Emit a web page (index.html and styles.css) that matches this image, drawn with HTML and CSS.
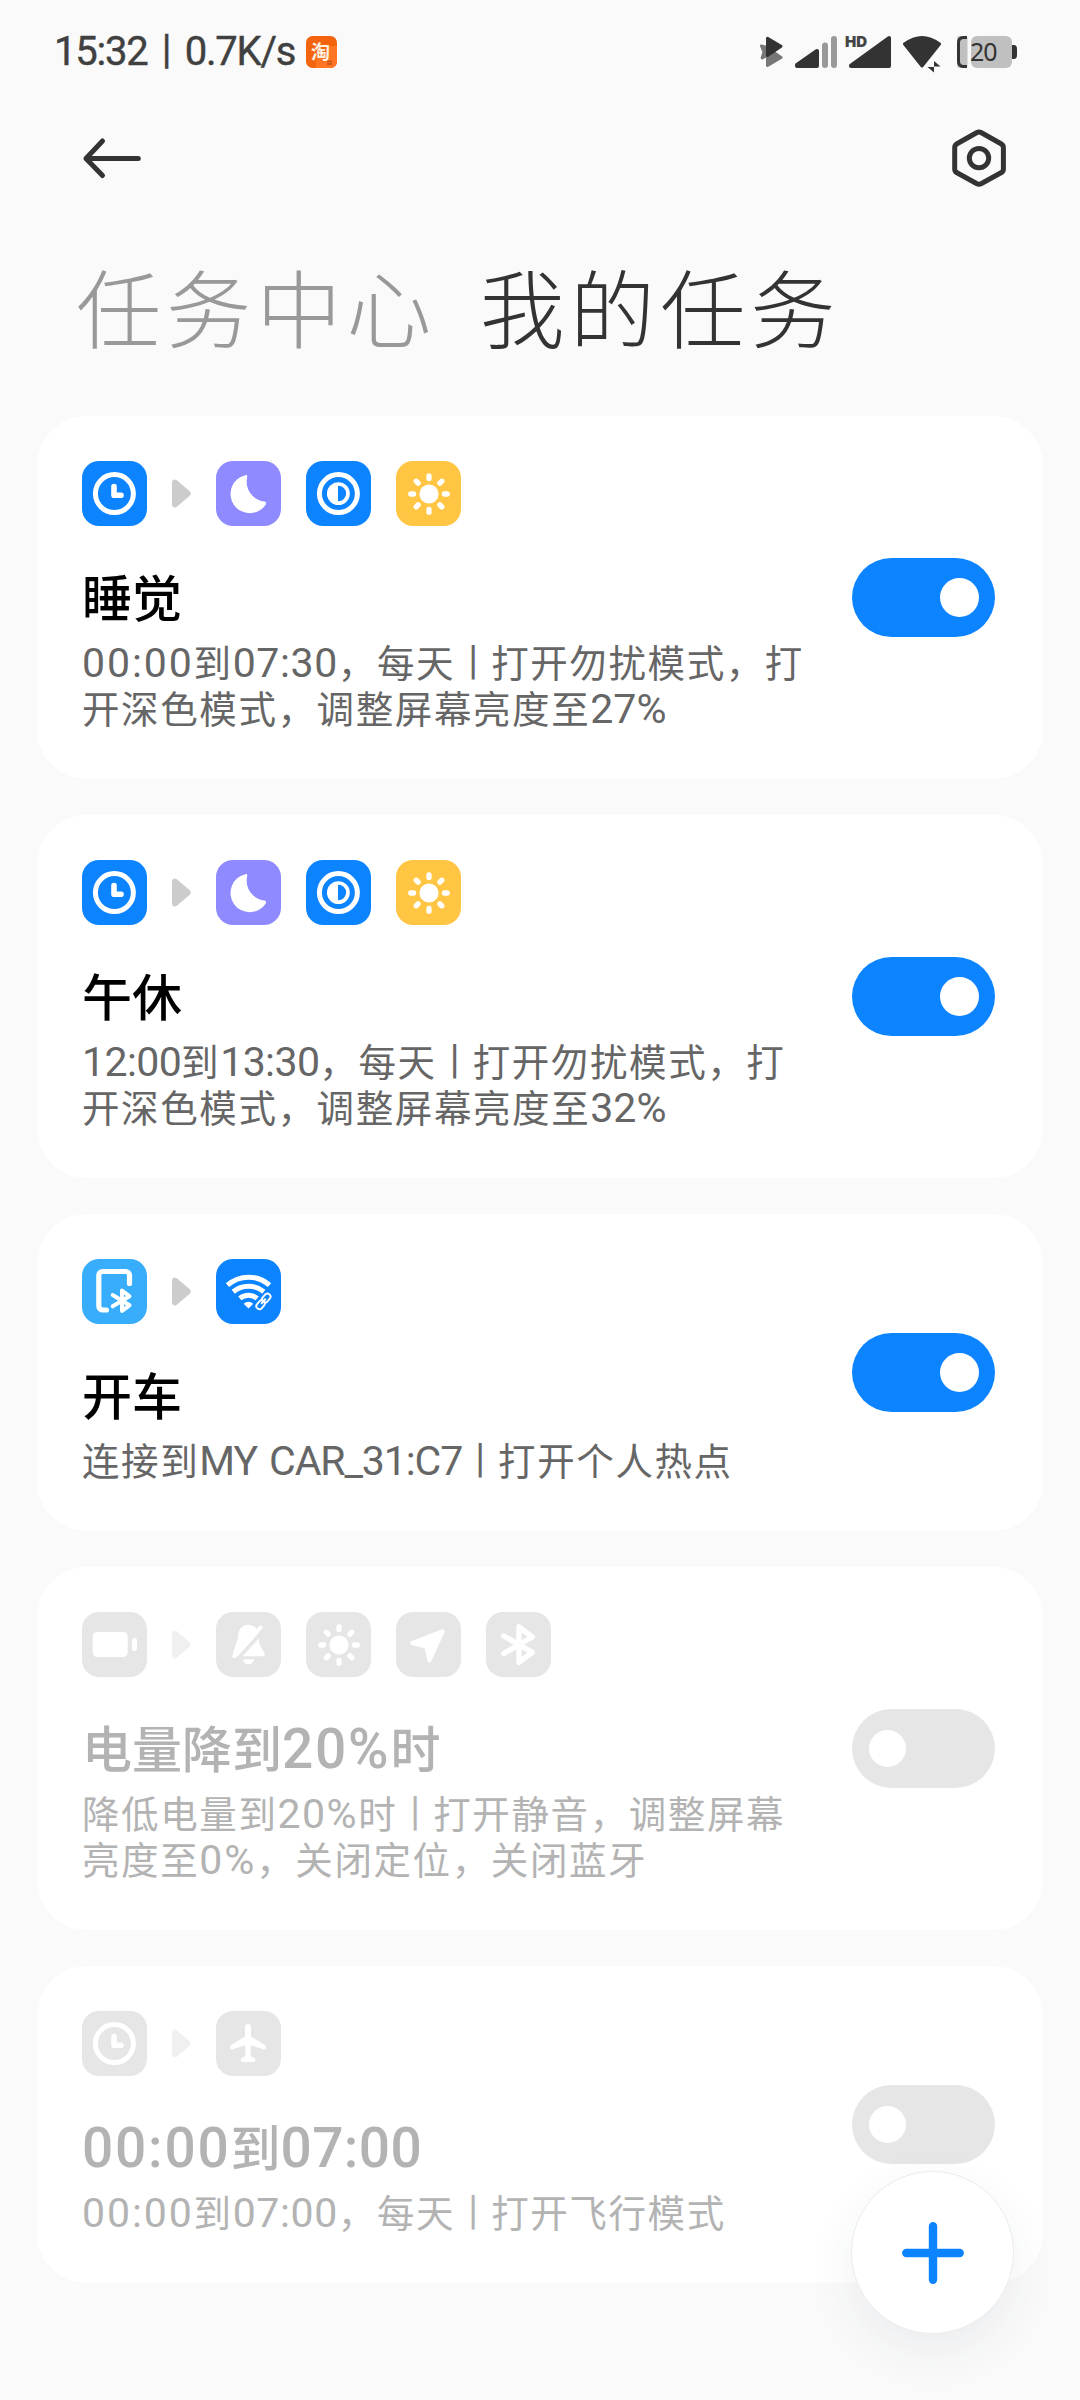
FILE: index.html
```html
<!DOCTYPE html>
<html lang="zh-CN">
<head>
<meta charset="utf-8">
<title>我的任务</title>
<link rel="stylesheet" href="styles.css">
</head>
<body>
<svg class="defs" width="0" height="0" aria-hidden="true">
  <defs>
    <symbol id="clock" viewBox="0 0 65 65">
      <g fill="none" stroke="#fff" stroke-linecap="round" stroke-linejoin="round"><circle cx="32.4" cy="32.6" r="19" stroke-width="5"/><path d="M32 25.5V34.2H39" stroke-width="5.6"/></g>
    </symbol>
    <symbol id="moon" viewBox="0 0 65 65">
      <path fill="#fff" d="M29.5 14.2A19.2 19.2 0 1 0 49.8 43.4C50.6 41.2 49 40 47 40.4A20 20 0 0 1 31 17.2C31.5 14.8 31.2 13.8 29.5 14.2Z"/>
    </symbol>
    <symbol id="dark" viewBox="0 0 65 65">
      <g fill="none" stroke="#fff"><circle cx="32.4" cy="32.6" r="19" stroke-width="5"/><circle cx="32.4" cy="32.6" r="9.6" stroke-width="3.7"/></g>
      <path fill="#fff" d="M32 22a10.5 10.5 0 0 0 0 21z"/>
    </symbol>
    <symbol id="sun" viewBox="0 0 65 65">
      <circle cx="33" cy="33" r="9.6" fill="#fff"/>
      <path fill="none" stroke="#fff" stroke-width="5.3" stroke-linecap="round" d="M33 14.8v2.8M33 48.4v2.8M14.8 33h2.8M48.4 33h2.8M20.2 20.2l1.9 1.9M43.9 43.9l1.9 1.9M20.2 45.8l1.9-1.9M43.9 22.1l1.9-1.9"/>
    </symbol>
    <symbol id="phone-bt" viewBox="0 0 65 65">
      <g fill="none" stroke="#fff" stroke-linecap="round" stroke-linejoin="round"><path stroke-width="5.2" d="M47.5 24.4V16.5a4 4 0 0 0-4-4H20.8a4 4 0 0 0-4 4V47a4 4 0 0 0 4 4h3.6"/><path stroke-width="4" d="M30.7 36L47.5 46.3 40 51.8V31.5L47.5 37.3 30.7 47.3"/></g>
    </symbol>
    <symbol id="hotspot" viewBox="0 0 65 65">
      <g fill="none" stroke="#fff"><path stroke-width="5" d="M11.5 26.2A31.4 31.4 0 0 1 53.5 26.2"/><path stroke-width="5" d="M17.2 32.7A24 24 0 0 1 47.8 32.7"/><path stroke-width="5" d="M23.8 39.4A13.6 13.6 0 0 1 41.2 39.4"/></g>
      <path fill="#fff" d="M27.6 44.8Q32.5 40.8 37.2 44.8L32.5 49.4Z"/>
      <g transform="rotate(-50 47.5 42.3)" fill="none"><g stroke="#fff" stroke-width="1.9"><rect x="38.2" y="39.2" width="9.6" height="6.2" rx="3"/><rect x="47" y="39.2" width="9.6" height="6.2" rx="3"/></g><path stroke="#fff" stroke-width="1.9" d="M44 42.3h7"/></g>
    </symbol>
    <symbol id="battery" viewBox="0 0 65 65">
      <rect x="10.7" y="20" width="35" height="25" rx="4.5" fill="#fff"/><rect x="50" y="26" width="5" height="13" rx="2.5" fill="#fff"/>
    </symbol>
    <symbol id="bell-off" viewBox="0 0 65 65">
      <path fill="#fff" d="M22 26C22 18 26 12.8 32.5 12.8S43 18 43 26V31L48.6 41.5Q49.6 44.3 47 44.3H19Q16 44.3 17 41Z"/>
      <path fill="#fff" d="M26.8 47.2H38.2Q37.2 52.2 32.5 52.2T26.8 47.2Z"/>
      <path fill="none" stroke="#e6e6e6" stroke-width="3.6" d="M49 16.7L20.5 48.5"/>
      <path fill="none" stroke="#fff" stroke-width="3.8" stroke-linecap="round" d="M44.7 15.2L18.3 44.2"/>
    </symbol>
    <symbol id="locate" viewBox="0 0 65 65">
      <path fill="#fff" stroke="#fff" stroke-width="4" stroke-linejoin="round" d="M46.8 19.2L16.2 31 30.6 34.8 33.4 48.4Z"/>
    </symbol>
    <symbol id="bt" viewBox="0 0 65 65">
      <path fill="none" stroke="#fff" stroke-width="5.4" stroke-linecap="round" stroke-linejoin="round" d="M17.8 24L46.2 40.3 33 50.3V14.8L46.2 25 17.8 41.5"/>
    </symbol>
    <symbol id="plane" viewBox="0 0 65 65">
      <path fill="#fff" d="M29 16a3 3 0 0 1 6 0V25.5L48 33.6Q50.3 35 50 37.3 49.5 38.9 47.5 38.3L35 34.2 34.5 44.8 38.6 47.3Q40.5 49.6 38.3 51H26Q23.6 49.6 25.5 47.3L29.6 44.8 29 34.2 16.5 38.3Q14.3 38.9 14 37.3 13.7 35 16 33.6L29 25.5Z"/>
    </symbol>
    <symbol id="arrow" viewBox="0 0 19 29">
      <path fill="currentColor" d="M0 3.500Q.6-.8 4.500.9L17.500 12Q20 14.500 17.500 17L4.500 28Q.6 29.800 0 25.500Z"/>
    </symbol>
  </defs>
</svg>

<div class="screen">
  <header class="status">
    <div class="status-left">
      <span class="status-text">15:32</span><span class="status-text sep">|</span><span class="status-text">0.7K/s</span>
      <svg class="app-badge" width="31" height="32" viewBox="0 0 31 32"><rect width="31" height="32" rx="6.500" fill="#f4640f"/><path fill="#ff7524" d="M10 22H22V10H31V26a6 6 0 0 1-6 6H10z"/><text class="badge-char" x="5" y="23">淘</text><path stroke="#c4501a" stroke-width="1.300" d="M21 25.500h5M21 28h5"/></svg>
    </div>
    <div class="status-right">
      <svg width="33" height="45" viewBox="756 30 33 45"><g stroke-linejoin="round" stroke-width="3"><path fill="#777" stroke="#777" d="M761.500 46L766.500 47.500 781 57.500 767.500 65.500V55L762.200 58 764 52Z"/><path fill="#333" stroke="#333" d="M767.500 38.200V55.500L781 46.200Z"/></g></svg>
      <svg width="52" height="45" viewBox="789 30 52 45"><path fill="#333" stroke="#333" stroke-width="4" stroke-linejoin="round" d="M797 66V65L817 51V66Z"/><path fill="none" stroke="#999" stroke-width="6" stroke-linecap="round" d="M825 45.500V65M834 39V65"/></svg>
      <svg width="56" height="45" viewBox="841 30 56 45"><path fill="#333" stroke="#333" stroke-width="4" stroke-linejoin="round" d="M851 66V65.500L889 38V66Z"/><text class="hd" x="845" y="47">HD</text></svg>
      <svg width="51" height="45" viewBox="897 30 51 45"><path fill="#333" stroke="#333" stroke-width="3" stroke-linejoin="round" d="M904.500 44Q922 31 939.500 44L922 66Z"/><path fill="#333" d="M934 61L940.500 66.500H934zM927.500 67H934V72.500z"/></svg>
      <svg width="72" height="45" viewBox="948 30 72 45"><rect x="957" y="36" width="10.500" height="32" rx="3" fill="#c0c0c0"/><path fill="none" stroke="#333" stroke-width="3" d="M967 37.500H963.500Q958.500 37.500 958.500 43V61Q958.500 66.500 963.500 66.500H967"/><rect x="971" y="36" width="41" height="32" rx="6" fill="#c0c0c0"/><path fill="#333" d="M1012 45h2q3 0 3 4v6q0 4-3 4h-2z"/><text class="level" x="970" y="61">20</text></svg>
    </div>
  </header>

  <nav class="toolbar">
    <svg width="62" height="58" viewBox="79 129 62 58"><path fill="none" stroke="#333" stroke-width="5" stroke-linecap="round" stroke-linejoin="round" d="M138.300 158.500H86M102.500 141L86 158.500 102.500 175.500"/></svg>
    <svg width="58" height="60" viewBox="949.500 128.500 58 60"><path fill="none" stroke="#333" stroke-width="5" stroke-linejoin="round" d="M976 133.200Q978.500 131.800 981 133.200L1000.500 144.200Q1002.900 145.500 1002.900 148.200V169.400Q1002.900 172 1000.500 173.300L981 184Q978.500 185.300 976 184L956.500 173.300Q954.200 172 954.200 169.400V148.200Q954.200 145.500 956.500 144.200Z"/><circle cx="978.500" cy="158.600" r="9.700" fill="none" stroke="#333" stroke-width="5"/></svg>
  </nav>

  <div class="tabs"><span class="tab">任务中心</span><span class="tab active">我的任务</span></div>

  <main class="list">
    <section class="card">
      <div class="info">
        <div class="icons"><svg class="ic blue"><use href="#clock"/></svg><svg class="arr"><use href="#arrow"/></svg><svg class="ic purple"><use href="#moon"/></svg><svg class="ic blue"><use href="#dark"/></svg><svg class="ic amber"><use href="#sun"/></svg></div>
        <h2>睡觉</h2>
        <p><b class="wide">00:00</b>到<b>07:30</b>，每天<i>|</i>打开勿扰模式，打<br>开深色模式，调整屏幕亮度至<b class="pct">27%</b></p>
      </div>
      <div class="switch on"><span class="knob"></span></div>
    </section>

    <section class="card">
      <div class="info">
        <div class="icons"><svg class="ic blue"><use href="#clock"/></svg><svg class="arr"><use href="#arrow"/></svg><svg class="ic purple"><use href="#moon"/></svg><svg class="ic blue"><use href="#dark"/></svg><svg class="ic amber"><use href="#sun"/></svg></div>
        <h2>午休</h2>
        <p><b class="tight">12:00</b>到<b class="tight">13:30</b>，每天<i>|</i>打开勿扰模式，打<br>开深色模式，调整屏幕亮度至<b class="pct">32%</b></p>
      </div>
      <div class="switch on"><span class="knob"></span></div>
    </section>

    <section class="card short">
      <div class="info">
        <div class="icons"><svg class="ic sky"><use href="#phone-bt"/></svg><svg class="arr"><use href="#arrow"/></svg><svg class="ic blue"><use href="#hotspot"/></svg></div>
        <h2>开车</h2>
        <p>连接到<b class="device">MY CAR_31:C7</b><i>|</i>打开个人热点</p>
      </div>
      <div class="switch on"><span class="knob"></span></div>
    </section>

    <section class="card off">
      <div class="info">
        <div class="icons"><svg class="ic"><use href="#battery"/></svg><svg class="arr"><use href="#arrow"/></svg><svg class="ic"><use href="#bell-off"/></svg><svg class="ic"><use href="#sun"/></svg><svg class="ic"><use href="#locate"/></svg><svg class="ic"><use href="#bt"/></svg></div>
        <h2>电量降到<b>20%</b>时</h2>
        <p>降低电量到<b class="level-text">20%</b>时<i>|</i>打开静音，调整屏幕<br>亮度至<b class="wide">0%</b>，关闭定位，关闭蓝牙</p>
      </div>
      <div class="switch"><span class="knob"></span></div>
    </section>

    <section class="card short off">
      <div class="info">
        <div class="icons"><svg class="ic"><use href="#clock"/></svg><svg class="arr"><use href="#arrow"/></svg><svg class="ic"><use href="#plane"/></svg></div>
        <h2><b>00:00</b>到<b class="end">07:00</b></h2>
        <p><b class="wide">00:00</b>到<b>07:00</b>，每天<i>|</i>打开飞行模式</p>
      </div>
      <div class="switch"><span class="knob"></span></div>
    </section>
  </main>

  <button class="fab" aria-label="添加"><svg width="62" height="62" viewBox="0 0 62 62"><path stroke="#0d84ff" stroke-width="8.400" stroke-linecap="round" d="M31 4.300V57.700M4.300 31H57.700"/></svg></button>
</div>
</body>
</html>
```
FILE: styles.css
```css
* { box-sizing: border-box; }
body {
  margin: 0;
  background: #fafafa;
  font-family: Roboto, "Noto Sans CJK SC", sans-serif;
}
.defs { display: block; height: 0; }
.screen { position: relative; width: 1080px; height: 2400px; overflow: hidden; }
svg { display: block; flex: none; }

.status {
  height: 104px;
  padding: 0 60px 0 54px;
  display: flex;
  justify-content: space-between;
}
.status-left { display: flex; align-items: center; height: 104px; }
.status-text {
  font: 400 40px/44px Roboto, sans-serif;
  letter-spacing: -1.2px;
  color: #404040;
  -webkit-text-stroke: .4px #404040;
}
.sep { width: 37px; text-align: center; padding-bottom: 4px; }
.app-badge { margin-left: 11px; }
.badge-char { font: 700 19px "Noto Sans CJK SC", sans-serif; fill: #fff1e0; }
.status-right { display: flex; padding-top: 30px; }
.hd { font: 900 15px Inter, sans-serif; fill: #444; }
.level { font: 400 25px "Noto Sans", sans-serif; fill: #333; letter-spacing: -1px; }

.toolbar {
  height: 110px;
  padding: 0 72px 2px 79px;
  display: flex;
  justify-content: space-between;
  align-items: center;
}
.tabs {
  height: 202px;
  padding: 35px 0 0 76px;
  display: flex;
  gap: 43px;
}
.tab {
  font-size: 85px;
  line-height: 128px;
  font-weight: 300;
  letter-spacing: 5.200px;
  color: #999;
  white-space: nowrap;
}
.tab.active { color: #333; }

.list { display: flex; flex-direction: column; gap: 36px; padding: 0 37px; }
.card {
  height: 363px;
  padding: 45px 48px 0 45px;
  border-radius: 50px;
  background: #fff;
  display: flex;
  justify-content: space-between;
}
.card.short { height: 317px; }
.icons { display: flex; align-items: center; gap: 25px; height: 65px; }
.ic { width: 65px; height: 65px; border-radius: 17px; background: #e6e6e6; }
.arr { width: 19px; height: 29px; color: #ccc; }
.off .arr { color: #f0f0f0; }
.blue { background: #0d84ff; }
.purple { background: #8f8aff; }
.amber { background: #ffc543; }
.sky { background: #38adfc; }

h2 {
  margin: 38px 0 0;
  height: 72px;
  font-size: 50px;
  line-height: 72px;
  font-weight: 500;
  color: #000;
  white-space: nowrap;
}
p {
  margin: 5px 0 0;
  font-size: 37.500px;
  line-height: 46px;
  letter-spacing: 1.600px;
  color: #666;
  white-space: nowrap;
}
.off h2, .off p { color: #b3b3b3; }
b { line-height: 1; }
h2 b { font-weight: 500; font-size: 55px; letter-spacing: 1.800px; }
h2 .end { letter-spacing: .4px; }
p b { font-weight: 400; font-size: 41px; letter-spacing: .6px; }
p .wide { letter-spacing: 1.900px; }
p .tight { letter-spacing: -.6px; }
p .pct { letter-spacing: 0; }
p .level-text { letter-spacing: 1.500px; }
p .device { letter-spacing: -1.100px; word-spacing: 3px; }
p i {
  display: inline-block;
  width: 36px;
  font-size: 40px;
  font-style: normal;
  line-height: 40px;
  letter-spacing: 0;
  text-align: center;
  vertical-align: 3px;
}

.switch {
  align-self: center;
  width: 143px;
  height: 79px;
  margin-top: -45px;
  padding: 0 17px;
  border-radius: 40px;
  background: #e6e6e6;
  display: flex;
  align-items: center;
}
.knob { width: 37px; height: 37px; border-radius: 50%; background: #fff; }
.switch.on { background: #0d84ff; justify-content: flex-end; padding: 0 16px; }
.on .knob { width: 39px; height: 39px; }

.fab {
  position: absolute;
  left: 851px;
  top: 2171px;
  width: 163px;
  height: 163px;
  padding: 0;
  border: 1px solid #ececec;
  border-radius: 50%;
  background: #fff;
  display: flex;
  align-items: center;
  justify-content: center;
  box-shadow: 0 18px 50px rgba(40, 50, 90, .07);
}
```
